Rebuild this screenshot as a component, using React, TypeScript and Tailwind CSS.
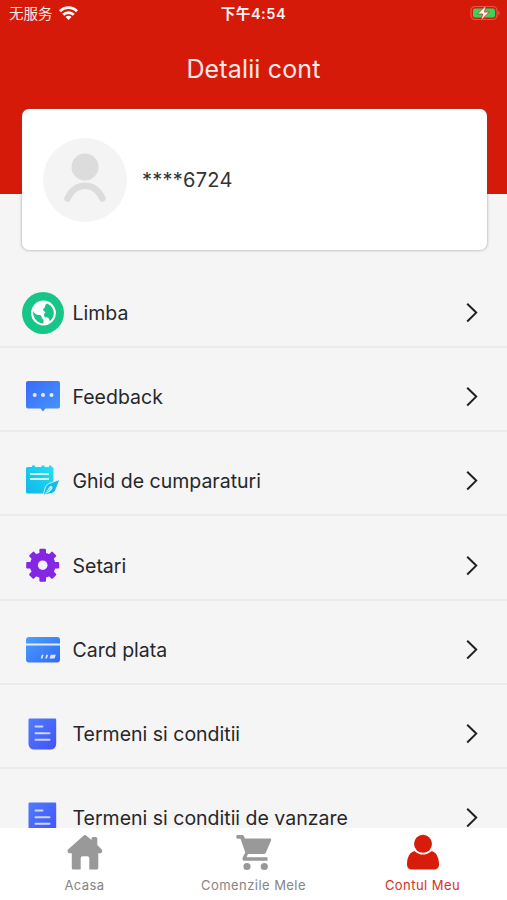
import type { ReactNode } from 'react';

function GlobeIcon() {
  return (
    <svg width="44" height="44" viewBox="0 0 44 44">
      <circle cx="22" cy="22" r="21" fill="#18c588" />
      <circle cx="22.500" cy="22" r="12.400" fill="#fff" />
      <path d="M12.200 20c.9 1.900 2.300 3.200 4 3.700 1.500.4 2.500-.2 3.700.9 1 .9.500 2 1.300 2.900.8 1 1.700 1.500 1.300 3-.2.800-.1 1.300.2 2.100-6.100-.1-11.300-5.700-10.500-12.600z" fill="#18c588" />
      <path d="M26 12.600c3.800 1.700 6.800 5.200 6.800 9.400 0 3.300-1.400 6-3.800 8-.9-.8-.6-2-1.500-2.900-1.100-1.100-3.100-.3-4.100-1.600-1-1.500-.2-3.200 1.100-3.900.3-.7-1.400-.9-2.200-2.100-.8-1.500.7-2.100 1.400-3.100.6-.9.800-1.300.3-2.100z" fill="#18c588" />
    </svg>
  );
}

function FeedbackIcon() {
  return (
    <svg width="44" height="44" viewBox="0 0 44 44">
      <defs>
        <linearGradient id="fb" x1="0" y1="0" x2="1" y2="1">
          <stop offset="0" stopColor="#3a6af8" />
          <stop offset="1" stopColor="#4596fb" />
        </linearGradient>
      </defs>
      <path d="M7 6h30a2 2 0 0 1 2 2v23.500a2 2 0 0 1-2 2H24.500l-2.500 3-2.500-3H7a2 2 0 0 1-2-2V8a2 2 0 0 1 2-2z" fill="url(#fb)" />
      <circle cx="13.700" cy="20" r="2" fill="#e4edff" />
      <circle cx="22" cy="20" r="2" fill="#e4edff" />
      <circle cx="30.500" cy="20" r="2" fill="#e4edff" />
    </svg>
  );
}

function GuideIcon() {
  return (
    <svg width="44" height="44" viewBox="0 0 44 44">
      <defs>
        <linearGradient id="gd" x1="1" y1="0" x2="0" y2="1">
          <stop offset="0" stopColor="#22e2ed" />
          <stop offset="1" stopColor="#12b5ec" />
        </linearGradient>
      </defs>
      <path d="M6.500 8h4.500V6.500h3V8h6.500V6.500h3V8H28V6.500h2.500V8h.5a1.500 1.500 0 0 1 1.500 1.500v13L26 27.500 23 34.500H6.500A1.500 1.500 0 0 1 5 33V9.500A1.500 1.500 0 0 1 6.500 8z" fill="url(#gd)" />
      <path d="M9 15h19M9 20h19" stroke="#c9fafb" strokeWidth="1.800" />
      <path d="M38.800 20.500l-10 3.700c-2.500 1-4.300 3-4.900 5.500L22.300 36l8.200-1.500c2.100-.4 3.600-1.800 4.300-3.800z" fill="#16bce6" stroke="#f5f5f5" strokeWidth=".8" />
      <path d="M23.800 35l4.900-7.500c1.300-1.500 3.600.5 2.500 2L28.500 33z" fill="#e3fafc" />
      <path d="M25.500 33.500l4.500-5" stroke="#16bce6" strokeWidth=".8" />
    </svg>
  );
}

function GearIcon() {
  return (
    <svg width="44" height="44" viewBox="0 0 44 44">
      <g fill="#8427e5" transform="translate(21.700 21.200)">
        <circle r="12.800" />
        <g>
          <rect x="-3.300" y="-16.500" width="6.600" height="33" rx="1" />
          <rect x="-16.500" y="-3.300" width="33" height="6.600" rx="1" />
        </g>
        <g transform="rotate(45)">
          <rect x="-3.300" y="-16.500" width="6.600" height="33" rx="1" />
          <rect x="-16.500" y="-3.300" width="33" height="6.600" rx="1" />
        </g>
        <circle r="4.800" fill="#f5f2fb" />
      </g>
    </svg>
  );
}

function CardIcon() {
  return (
    <svg width="44" height="44" viewBox="0 0 44 44">
      <defs>
        <linearGradient id="cd" x1="0" y1="0" x2="1" y2="1">
          <stop offset="0" stopColor="#4ba0fc" />
          <stop offset="1" stopColor="#3368fa" />
        </linearGradient>
      </defs>
      <rect x="5" y="9" width="34" height="25.500" rx="3" fill="url(#cd)" />
      <path d="M5 16.500h34" stroke="#e1efff" strokeWidth="2" />
      <path d="M20.500 30.500l1.300-3.700M25 30.500l1.300-3.700" stroke="#dce9ff" strokeWidth="1.700" />
      <path d="M28.500 30.500l1.300-3.700h5l-1.300 3.700z" fill="#dce9ff" />
    </svg>
  );
}

function DocIcon({ id }: { id: string }) {
  return (
    <svg width="44" height="44" viewBox="0 0 44 44">
      <defs>
        <linearGradient id={id} x1="0" y1="0" x2="1" y2="1">
          <stop offset="0" stopColor="#4e7cff" />
          <stop offset="1" stopColor="#4352f8" />
        </linearGradient>
      </defs>
      <path d="M8.700 6.500H34a1.200 1.200 0 0 1 1.200 1.200V32a5.500 5.500 0 0 1-5.500 5.500H13a5.500 5.500 0 0 1-5.500-5.500V7.700a1.200 1.200 0 0 1 1.200-1.200z" fill={`url(#${id})`} />
      <path d="M14.500 14.500h7M14.500 21.200h14M14.500 27.800h14" stroke="#ccd7ff" strokeWidth="2" strokeLinecap="round" />
    </svg>
  );
}

function Row({ icon, label }: { icon: ReactNode; label: string }) {
  return (
    <div className="flex h-[84.300px] shrink-0 items-center border-b-2 border-[#ebebeb] pt-[16px] pl-[21px] pr-[28px]">
      {icon}
      <span className="ml-[7.500px] whitespace-nowrap text-[19.500px] leading-[24px] text-[#27272a]">{label}</span>
      <svg className="ml-auto" width="14" height="22" viewBox="0 0 14 22">
        <path d="M2.200 1.700l9 8.900-9 8.900" fill="none" stroke="#202020" strokeWidth="2" />
      </svg>
    </div>
  );
}

function Tab({ icon, label, active = false }: { icon: ReactNode; label: string; active?: boolean }) {
  return (
    <div className={`flex flex-1 flex-col items-center pt-[6px] ${active ? 'text-[#d71c0b]' : 'text-[#999]'}`}>
      {icon}
      <span className={`mt-[5px] text-[13px] leading-[18px] tracking-[0.450px] ${active ? 'text-[#d8301f]' : 'text-[#858585]'}`}>{label}</span>
    </div>
  );
}

export default function App() {
  return (
    <div className="flex h-[900px] w-[507px] flex-col overflow-hidden bg-[#f5f5f5] font-['Inter','Noto_Sans_CJK_SC',sans-serif]">
      <header className="h-[194px] shrink-0 bg-[#d61a09] text-[#ffe9e6]">
        <div className="grid h-[27px] grid-cols-3 items-center pl-[9px] pr-[6px]">
          <div className="flex items-center gap-[6px] text-[14.500px]">
            <span>无服务</span>
            <svg className="-mt-[2px]" width="19" height="14" viewBox="0 0 19 14" fill="none" stroke="#fff" strokeWidth="2.800">
              <path d="M1 5.200a12 12 0 0 1 17 0M4.200 8.800a7.500 7.500 0 0 1 10.600 0" />
              <path d="M9.500 14L6.500 11a4.200 4.200 0 0 1 6 0z" fill="#fff" stroke="none" />
            </svg>
          </div>
          <div className="-ml-[3px] whitespace-nowrap text-center text-[14.500px] font-semibold tracking-[0.550px] text-[#fff3f1]">下午4:54</div>
          <svg className="ml-auto -mt-[1px]" width="31" height="16" viewBox="0 0 31 16">
            <rect x="1" y="1.500" width="26" height="13" rx="4" fill="none" stroke="#e8564a" strokeWidth="1.200" />
            <rect x="3" y="3.500" width="22" height="9" rx="2" fill="#3bd15d" />
            <path d="M28.300 5.800v4.400c2-.8 2-3.600 0-4.400z" fill="#e8564a" />
            <path d="M16.300.3L7.500 9h5.300l-2.100 6.700L19.300 7h-5z" fill="#fff" stroke="#d61a09" strokeWidth=".7" />
          </svg>
        </div>
        <h1 className="mt-[25px] text-center text-[25px] font-normal leading-[34px] tracking-[0.150px]">Detalii cont</h1>
      </header>

      <section className="relative mr-[20px] ml-[21.500px] -mt-[85px] flex h-[141px] shrink-0 items-center rounded-[7px] bg-white pl-[21.500px] shadow-[0_0_3px_rgba(90,90,90,0.600)]">
        <svg width="84" height="84" viewBox="0 0 84 84">
          <circle cx="42" cy="42" r="42" fill="#f4f4f4" />
          <circle cx="42" cy="29" r="13.500" fill="#dcdcdc" />
          <path d="M24.500 60.500c8-17 27-17 35 0" fill="none" stroke="#dcdcdc" strokeWidth="6.500" strokeLinecap="round" />
        </svg>
        <span className="ml-[15px] text-[20px] tracking-[0.250px] text-[#333]">****6724</span>
      </section>

      <main className="flex min-h-0 flex-1 flex-col overflow-hidden pt-[13.500px]">
        <Row icon={<GlobeIcon />} label="Limba" />
        <Row icon={<FeedbackIcon />} label="Feedback" />
        <Row icon={<GuideIcon />} label="Ghid de cumparaturi" />
        <Row icon={<GearIcon />} label="Setari" />
        <Row icon={<CardIcon />} label="Card plata" />
        <Row icon={<DocIcon id="doc1" />} label="Termeni si conditii" />
        <Row icon={<DocIcon id="doc2" />} label="Termeni si conditii de vanzare" />
      </main>

      <nav className="flex h-[72px] shrink-0 bg-white">
        <Tab
          label="Acasa"
          icon={
            <svg width="36" height="37" viewBox="0 0 36 37" fill="currentColor">
              <path d="M16.500 1.800a2.200 2.200 0 0 1 3 0L24.500 6V4.500A1.500 1.500 0 0 1 26 3h2.800a1.500 1.500 0 0 1 1.500 1.500V11l4.200 4.200c1.500 1.500.7 4-1.200 4h-2V34a1.500 1.500 0 0 1-1.500 1.500h-7.500V24.200a2 2 0 0 0-2-2h-4.600a2 2 0 0 0-2 2v11.300H6.300A1.500 1.500 0 0 1 4.800 34V19.200H2.500c-2 0-2.700-2.500-1.200-4z" />
            </svg>
          }
        />
        <Tab
          label="Comenzile Mele"
          icon={
            <svg width="36" height="37" viewBox="0 0 36 37" fill="currentColor">
              <path d="M1.500 1H6c1 0 1.500.5 1.900 1.300L9 4.500h24.500c1.500 0 2 1 1.500 2l-5.200 12.200a2.500 2.500 0 0 1-2.200 1.300H12l-1.500 3.300h21v3.500H9c-2.600 0-3-2-2-4l2.300-4.300L4.500 4.700h-3C-.2 4.700-.2 1 1.500 1z" />
              <circle cx="11" cy="32.500" r="3.600" />
              <circle cx="28.300" cy="32.500" r="3.600" />
            </svg>
          }
        />
        <Tab
          active
          label="Contul Meu"
          icon={
            <svg width="36" height="37" viewBox="0 0 36 37" fill="currentColor">
              <circle cx="18" cy="9.800" r="9" />
              <path d="M9.800 17.200c5 4.500 11.400 4.500 16.400 0C31 17.500 34 23 34 30.500c0 3-2 5-5 5H7c-3 0-5-2-5-5 0-7.500 3-13 7.800-13.300z" />
            </svg>
          }
        />
      </nav>
    </div>
  );
}
